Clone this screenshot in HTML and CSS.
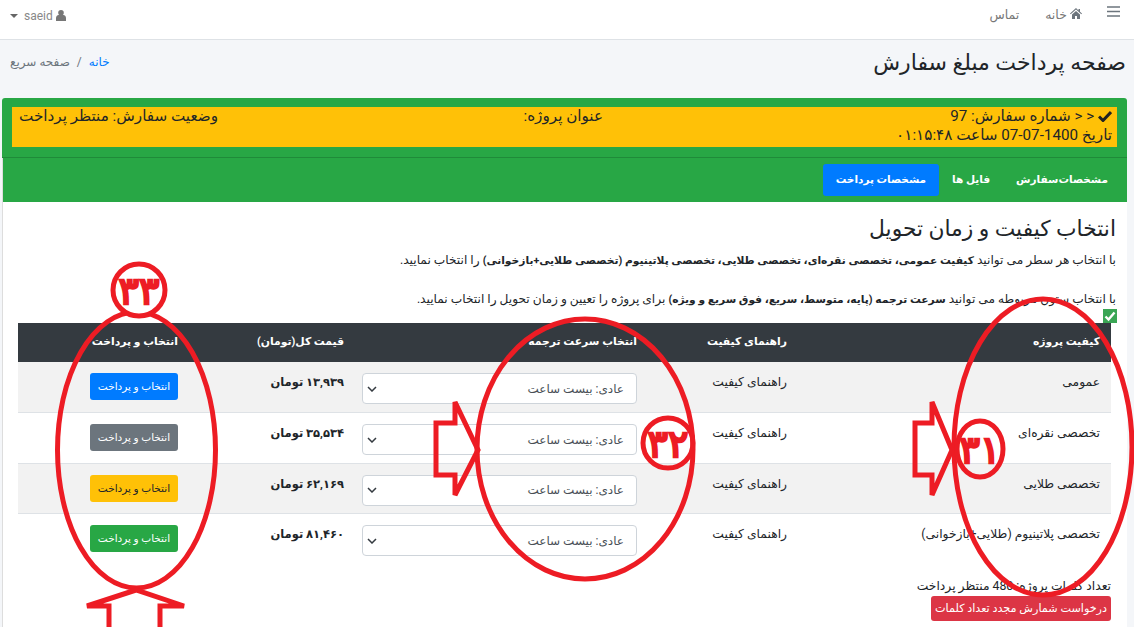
FILE: index.html
```html
<!DOCTYPE html>
<html lang="fa" dir="rtl">

<head>
    <meta charset="UTF-8">
    <title>صفحه پرداخت مبلغ سفارش</title>
    <link rel="stylesheet" href="styles.css">
</head>

<body>
    <nav class="navbar">
        <a class="nav-bars" href="#">
            <svg width="13" height="11" viewBox="0 0 13 11"><path d="M0 1h13M0 5.500h13M0 10h13" stroke="#6c757d" stroke-width="1.600"/></svg>
        </a>
        <a class="nav-link" href="#">
            <svg width="12" height="11" viewBox="0 0 12 11"><path d="M6 0 0 5.500l.7.7L6 1.500l5.300 4.700.7-.7-2-1.800V1H8.500v1.500zM2 6.500V11h3V8h2v3h3V6.500L6 3z" fill="#6c757d"/></svg>
            خانه
        </a>
        <a class="nav-link" href="#">تماس</a>
        <a class="nav-user" href="#">
            <svg width="10" height="11" viewBox="0 0 10 11"><circle cx="5" cy="2.800" r="2.800" fill="#777"/><path d="M0 11V8c0-2 1.500-3 2.500-3h5c1 0 2.500 1 2.500 3v3z" fill="#777"/></svg>
            <span dir="ltr">saeid</span>
            <span class="caret"></span>
        </a>
    </nav>

    <header class="page-head">
        <h1>صفحه پرداخت مبلغ سفارش</h1>
        <div class="breadcrumb"><a href="#">خانه</a><span class="sep">/</span><span>صفحه سریع</span></div>
    </header>

    <main class="content">
        <section class="order-card">
            <div class="order-info">
                <div>
                    <div>
                        <svg class="check" width="14" height="12" viewBox="0 0 14 12"><path d="M1 6.500 5 10.500 13 2" fill="none" stroke="#222" stroke-width="3"/></svg>
                        &lt; &lt; شماره سفارش: 97
                    </div>
                    <div>تاریخ 1400-07-07 ساعت ۰۱:۱۵:۴۸</div>
                </div>
                <div>عنوان پروژه:</div>
                <div>وضعیت سفارش: منتظر پرداخت</div>
            </div>
        </section>

        <section class="tabs-card">
            <ul class="tabs">
                <li><a href="#">مشخصات‌سفارش</a></li>
                <li><a href="#">فایل ها</a></li>
                <li><a class="active" href="#">مشخصات پرداخت</a></li>
            </ul>

            <div class="tab-body">
                <h2>انتخاب کیفیت و زمان تحویل</h2>
                <p class="hint">با انتخاب هر سطر می توانید <b>کیفیت عمومی، تخصصی نقره‌ای، تخصصی طلایی، تخصصی پلاتینیوم (تخصصی طلایی+بازخوانی)</b> را انتخاب نمایید.</p>
                <p class="hint second">با انتخاب ستون مربوطه می توانید <b>سرعت ترجمه (پایه، متوسط، سریع، فوق سریع و ویژه)</b> برای پروژه را تعیین و زمان تحویل را انتخاب نمایید.</p>
                <svg class="ok-mark" width="14" height="14" viewBox="0 0 14 14"><rect width="14" height="14" fill="#3aa655"/><path d="M2.500 7.500 5.500 10.500 11.500 3.500" fill="none" stroke="#fff" stroke-width="2.400"/></svg>

                <table class="price-table">
                    <thead>
                        <tr>
                            <th class="col-quality">کیفیت پروژه</th>
                            <th class="col-guide">راهنمای کیفیت</th>
                            <th class="col-speed">انتخاب سرعت ترجمه</th>
                            <th class="col-price">قیمت کل(تومان)</th>
                            <th class="col-pay">انتخاب و پرداخت</th>
                        </tr>
                    </thead>
                    <tbody>
                        <tr>
                            <td>عمومی</td>
                            <td>راهنمای کیفیت</td>
                            <td><select class="speed"><option>عادی: بیست ساعت</option></select></td>
                            <td><b>۱۳,۹۳۹ تومان</b></td>
                            <td><a class="btn btn-blue" href="#">انتخاب و پرداخت</a></td>
                        </tr>
                        <tr>
                            <td>تخصصی نقره‌ای</td>
                            <td>راهنمای کیفیت</td>
                            <td><select class="speed"><option>عادی: بیست ساعت</option></select></td>
                            <td><b>۳۵,۵۳۴ تومان</b></td>
                            <td><a class="btn btn-gray" href="#">انتخاب و پرداخت</a></td>
                        </tr>
                        <tr>
                            <td>تخصصی طلایی</td>
                            <td>راهنمای کیفیت</td>
                            <td><select class="speed"><option>عادی: بیست ساعت</option></select></td>
                            <td><b>۶۲,۱۶۹ تومان</b></td>
                            <td><a class="btn btn-yellow" href="#">انتخاب و پرداخت</a></td>
                        </tr>
                        <tr>
                            <td>تخصصی پلاتینیوم (طلایی+بازخوانی)</td>
                            <td>راهنمای کیفیت</td>
                            <td><select class="speed"><option>عادی: بیست ساعت</option></select></td>
                            <td><b>۸۱,۴۶۰ تومان</b></td>
                            <td><a class="btn btn-green" href="#">انتخاب و پرداخت</a></td>
                        </tr>
                    </tbody>
                </table>

                <div class="word-count">
                    <div>تعداد کلمات پروژه: 480 منتظر پرداخت</div>
                    <a class="btn btn-red" href="#">درخواست شمارش مجدد تعداد کلمات</a>
                </div>
            </div>
        </section>
    </main>

    <!-- red marks drawn over the screenshot -->
    <svg class="marks" width="1134" height="627" viewBox="0 0 1134 627">
        <g fill="none" stroke="#ed1c24" stroke-width="5">
            <ellipse cx="136.500" cy="450" rx="79" ry="138"/>
            <circle cx="139" cy="290" r="26" fill="#fff"/>
            <ellipse cx="585" cy="449" rx="108" ry="130"/>
            <circle cx="668" cy="443" r="25"/>
            <ellipse cx="1043" cy="447" rx="89" ry="148"/>
            <ellipse cx="980" cy="449" rx="23" ry="28"/>
            <path d="M436 423h19v-21l23 48-23 45v-20h-19z"/>
            <path d="M915 423h17v-21l20 48-20 45v-20h-17z"/>
            <path d="M109 627v-21H87l49-16 48 16h-24v21"/>
        </g>
        <g class="mark-num">
            <text x="139" y="304">۳۳</text>
            <text x="668" y="457">۳۲</text>
            <text x="980" y="463">۳۱</text>
        </g>
    </svg>
</body>

</html>
```

FILE: styles.css
```css
html,
body {
    height: 627px;
    overflow: hidden;
}

body {
    margin: 0;
    position: relative;
    font-family: Roboto, "DejaVu Sans", sans-serif;
    font-size: 12.300px;
    line-height: 1.5;
    color: #212529;
    background-color: #f4f6f9;
}

a {
    text-decoration: none;
}

.navbar {
    display: flex;
    align-items: center;
    height: 40px;
    padding: 0 14px 8px 10px;
    box-sizing: border-box;
    background-color: #fff;
    border-bottom: 1px solid #dee2e6;
}

.nav-bars {
    display: flex;
    margin-left: 25px;
    margin-bottom: 8px;
}

.nav-link {
    margin-left: 26px;
    font-size: 12.500px;
    color: #777;
}

.nav-user {
    margin-right: auto;
    display: flex;
    align-items: center;
    gap: 3px;
    font-size: 12px;
    color: #888;
}

.caret {
    margin-right: 3px;
    border-top: 4px solid #666;
    border-left: 4px solid transparent;
    border-right: 4px solid transparent;
}

.page-head {
    display: flex;
    justify-content: space-between;
    align-items: center;
    height: 58px;
    padding: 0 8px 14px 10px;
    box-sizing: border-box;
}

.page-head h1 {
    margin: 0;
    font-size: 22px;
    font-weight: 500;
}

.breadcrumb {
    font-size: 12px;
    color: #6c757d;
}

.breadcrumb a {
    color: #007bff;
}

.sep {
    margin: 0 7px;
}

.content {
    padding: 0 7px 0 0;
    margin-left: 2px;
}

.order-card {
    padding: 9px 10px 10px;
    background-color: #28a745;
    border-radius: 3px 3px 0 0;
    border-bottom: 1px solid #1f8b39;
}

.order-info {
    display: grid;
    grid-template-columns: 509px 385px 1fr;
    height: 40px;
    padding: 0 5px 0 0;
    font-size: 15.200px;
    line-height: 19px;
    background-color: #ffc107;
}

.check {
    vertical-align: -1px;
}

.tabs-card {
    background-color: #fff;
    border-left: 1px solid #ddd;
}

.tabs {
    display: flex;
    align-items: center;
    height: 44px;
    margin: 0;
    padding: 0 6px 0 0;
    list-style: none;
    background-color: #28a745;
}

.tabs a {
    display: block;
    padding: 8px 13px;
    border-radius: 3px;
    font-size: 10.500px;
    font-weight: bold;
    color: #fff;
}

.tabs a.active {
    background-color: #007bff;
}

.tab-body {
    height: 425px;
    padding: 12px 11px 0 0;
    box-sizing: border-box;
}

.tab-body h2 {
    margin: 0 0 6px;
    font-size: 21.800px;
    font-weight: 500;
    line-height: 30px;
}

.hint {
    height: 20px;
    margin: 0;
    line-height: 20px;
    font-size: 12.200px;
}

.hint b {
    font-size: 10.700px;
}

.hint.second {
    margin-top: 19px;
}

.ok-mark {
    display: block;
    margin-right: -1px;
}

.price-table {
    width: 1093px;
    margin-right: 5px;
    border-collapse: collapse;
    table-layout: fixed;
}

.price-table th {
    height: 39px;
    padding: 0 11px;
    box-sizing: border-box;
    font-size: 10.800px;
    text-align: right;
    color: #fff;
    background-color: #343a40;
}

.col-quality {
    width: 313px;
}

.col-guide {
    width: 150px;
}

.col-speed {
    width: 293px;
}

.col-price {
    width: 166px;
}

.price-table td {
    height: 50.500px;
    padding: 11px 11px 0;
    box-sizing: border-box;
    vertical-align: top;
    border-bottom: 1px solid #dee2e6;
}

.price-table td b {
    font-size: 11.500px;
}

.price-table tbody tr:nth-child(odd) td {
    background-color: #f2f2f2;
}

.price-table tbody tr:last-child td {
    border-bottom: 0;
}

.speed {
    display: block;
    width: 275px;
    height: 31px;
    padding: 0 12px 0 20px;
    font-family: inherit;
    font-size: 12px;
    color: #495057;
    text-align: right;
    background: #fff url("data:image/svg+xml,%3Csvg xmlns='http://www.w3.org/2000/svg' width='10' height='6'%3E%3Cpath d='M1 1l4 4 4-4' fill='none' stroke='%23343a40' stroke-width='1.500'/%3E%3C/svg%3E") no-repeat 4px center;
    border: 1px solid #ced4da;
    border-radius: 4px;
    appearance: none;
}

.btn {
    display: block;
    width: 88px;
    height: 27px;
    box-sizing: border-box;
    font-size: 10.500px;
    line-height: 27px;
    text-align: center;
    white-space: nowrap;
    border-radius: 3px;
    color: #fff;
}

.btn-blue {
    background-color: #007bff;
}

.btn-gray {
    background-color: #6c757d;
}

.btn-yellow {
    color: #212529;
    background-color: #ffc107;
}

.btn-green {
    background-color: #28a745;
}

.btn-red {
    width: 180px;
    height: 25px;
    margin-top: 1px;
    line-height: 25px;
    font-size: 11.200px;
    background-color: #dc3545;
}

.word-count {
    display: flex;
    flex-direction: column;
    align-items: flex-start;
    margin: 13px 5px 0 0;
    font-size: 12.300px;
}

.marks {
    position: absolute;
    top: 0;
    left: 0;
    pointer-events: none;
}

.mark-num text {
    font-family: "DejaVu Sans", sans-serif;
    font-size: 38px;
    text-anchor: middle;
    fill: #ed1c24;
    stroke: #ed1c24;
    stroke-width: 2.500;
    direction: ltr;
}
```
